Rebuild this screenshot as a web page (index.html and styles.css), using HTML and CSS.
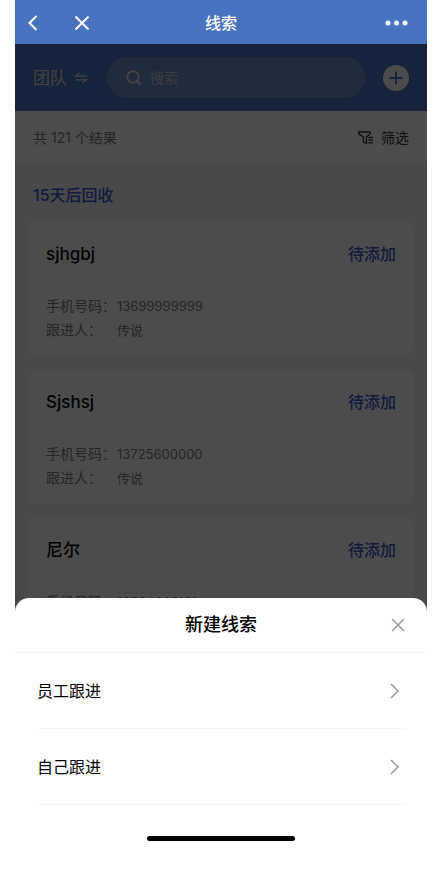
FILE: index.html
```html
<!DOCTYPE html>
<html lang="zh-CN">
<head>
<meta charset="utf-8">
<meta name="viewport" content="width=device-width, initial-scale=1">
<title>线索</title>
<link rel="stylesheet" href="styles.css">
</head>
<body>
<div class="screen">
  <header class="navbar">
    <div class="nav-actions">
      <button class="icon-btn" type="button" aria-label="返回"><svg width="12" height="18" viewBox="0 0 12 18"><path d="M9.5 2 2.5 9l7 7"/></svg></button>
      <button class="icon-btn" type="button" aria-label="关闭"><svg width="16" height="16" viewBox="0 0 16 16"><path d="m1.500 1.500 13 13M14.500 1.500l-13 13"/></svg></button>
    </div>
    <h1 class="nav-title">线索</h1>
    <button class="icon-btn nav-more" type="button" aria-label="更多"><svg class="solid" width="24" height="6" viewBox="0 0 24 6"><circle cx="3" cy="3" r="2.500"/><circle cx="11.500" cy="3" r="2.500"/><circle cx="20" cy="3" r="2.500"/></svg></button>
  </header>

  <div class="page">
    <div class="toolbar">
      <button class="team" type="button">团队<svg width="14" height="14" viewBox="0 0 14 14"><path d="M13 5.200H1.500L5.500 2M1 8.800h11.500L8.500 12"/></svg></button>
      <label class="search">
        <svg width="16" height="16" viewBox="0 0 16 16"><circle cx="7" cy="7" r="5.700"/><path d="m11.300 11.300 3.300 3.300"/></svg>
        <input type="search" placeholder="搜索" aria-label="搜索">
      </label>
      <button class="icon-btn" type="button" aria-label="新建"><svg class="add" width="26" height="26" viewBox="0 0 26 26"><circle cx="13" cy="13" r="13"/><path d="M13 6.500v13M6.500 13h13"/></svg></button>
    </div>
    <div class="summary">
      <span>共 121 个结果</span>
      <button class="filter" type="button"><svg width="15" height="14" viewBox="0 0 15 14"><path d="M.8 1h11.400v1.800L8.500 6v6.300l-3-1.300V6L.8 2.800zM10.500 6.500H15M10.500 9.200H15M10.500 11.900H15"/></svg>筛选</button>
    </div>
    <main class="list">
      <h2 class="group">15天后回收</h2>
      <article class="card">
        <div class="card-head"><h3>sjhgbj</h3><span class="status">待添加</span></div>
        <dl><dt>手机号码：</dt><dd>13699999999</dd><dt>跟进人：</dt><dd>传说</dd></dl>
      </article>
      <article class="card">
        <div class="card-head"><h3>Sjshsj</h3><span class="status">待添加</span></div>
        <dl><dt>手机号码：</dt><dd>13725600000</dd><dt>跟进人：</dt><dd>传说</dd></dl>
      </article>
      <article class="card">
        <div class="card-head"><h3>尼尔</h3><span class="status">待添加</span></div>
        <dl><dt>手机号码：</dt><dd>13584625121</dd><dt>跟进人：</dt><dd>传说</dd></dl>
      </article>
    </main>
    <div class="mask"></div>
  </div>

  <section class="sheet" role="dialog" aria-labelledby="sheet-title">
    <div class="sheet-head">
      <h2 id="sheet-title">新建线索</h2>
      <button class="icon-btn" type="button" aria-label="关闭"><svg width="14" height="14" viewBox="0 0 14 14"><path d="m1 1 12 12M13 1 1 13"/></svg></button>
    </div>
    <div class="options">
      <button class="option" type="button">员工跟进<svg width="10" height="16" viewBox="0 0 10 16"><path d="m1 1 7 7-7 7"/></svg></button>
      <button class="option" type="button">自己跟进<svg width="10" height="16" viewBox="0 0 10 16"><path d="m1 1 7 7-7 7"/></svg></button>
    </div>
    <div class="home-bar"></div>
  </section>
</div>
</body>
</html>
```
FILE: styles.css
```css
* {
  box-sizing: border-box;
}

body {
  margin: 0;
  padding: 0 11px 0 15px;
  background: #fff;
  color: #000;
  font-family: Inter, "Noto Sans CJK SC", sans-serif;
  font-size: 14px;
  line-height: 24px;
}

h1, h2, h3 {
  margin: 0;
  font-weight: 500;
}

dl, dd {
  margin: 0;
}

button {
  padding: 0;
  border: 0;
  background: none;
  color: inherit;
  font: inherit;
}

svg {
  display: block;
  flex: none;
  fill: none;
  stroke: currentColor;
  stroke-width: 2;
}

.screen {
  position: relative;
  display: flex;
  flex-direction: column;
  min-height: 100vh;
}

.navbar {
  display: grid;
  grid-template-columns: 1fr auto 1fr;
  align-items: center;
  height: 44px;
  padding: 2px 12px 0;
  background: #4873c0;
  color: #fff;
}

.nav-actions {
  display: flex;
  align-items: center;
  gap: 35px;
}

.nav-title {
  font-size: 16px;
}

.nav-more {
  justify-self: end;
  padding-right: 6px;
}

.solid {
  fill: currentColor;
  stroke: none;
}

.page {
  position: relative;
  flex: 1;
  background: #f4f4f8;
}

.mask {
  position: absolute;
  inset: 0;
  background: rgb(0 0 0 / 70%);
}

.toolbar {
  display: flex;
  align-items: center;
  height: 67px;
  padding: 0 18px;
  background: #4c75c1;
  color: #fff;
}

.team {
  display: flex;
  align-items: center;
  gap: 7px;
  font-size: 17px;
  color: #e0ddd6;
}

.team svg {
  stroke-width: 1.3;
}

.search {
  display: flex;
  flex: 1;
  align-items: center;
  gap: 8px;
  min-width: 0;
  height: 41px;
  margin: 0 18px 0 19px;
  padding: 0 19px;
  border-radius: 21px;
  background: #6e8fc6;
  color: #e0e0e0;
}

.search input {
  flex: 1;
  min-width: 0;
  padding: 0;
  border: 0;
  outline: 0;
  background: none;
  color: inherit;
  font: inherit;
}

.search input::placeholder {
  color: #c8ccd2;
  opacity: 1;
}

.add {
  fill: #fff;
  stroke: none;
}

.add path {
  stroke: #4c75c1;
}

.summary {
  display: flex;
  align-items: center;
  justify-content: space-between;
  height: 53px;
  padding: 0 18px;
  background: #fff;
  color: #808080;
}

.filter {
  display: flex;
  align-items: center;
  gap: 8px;
  color: #333;
}

.filter svg {
  stroke-width: 1.3;
}

.list {
  display: flex;
  flex-direction: column;
  gap: 15px;
  padding: 19px 13px 0;
}

.group {
  padding-left: 5px;
  color: #3d5cc8;
  font-size: 16px;
}

.list .card {
  padding: 0 18px 13px;
  border-radius: 8px;
  background: #fff;
}

.card-head {
  display: flex;
  align-items: center;
  justify-content: space-between;
  height: 60px;
  padding-top: 4px;
  border-bottom: 1px solid #f4f4f8;
}

.card-head h3 {
  font-size: 17px;
}

.status {
  color: #3d5cc8;
  font-size: 16px;
  font-weight: 500;
}

dl {
  display: grid;
  grid-template-columns: 71px 1fr;
  padding-top: 12px;
  color: #808080;
}

dt {
  white-space: nowrap;
}

dd {
  font-size: 13px;
}

.sheet {
  position: absolute;
  right: 0;
  bottom: 0;
  left: 0;
  padding-bottom: 31px;
  border-radius: 14px 14px 0 0;
  background: #fff;
}

.sheet-head {
  display: grid;
  grid-template-columns: 1fr auto 1fr;
  align-items: center;
  height: 55px;
  padding: 0 22px;
  border-bottom: 1px solid #f6f6f6;
}

.sheet-head h2 {
  grid-column: 2;
  font-size: 18px;
}

.sheet-head .icon-btn {
  justify-self: end;
  color: #999;
}

.sheet-head svg,
.option svg {
  stroke-width: 1.5;
}

.options {
  padding: 0 22px;
}

.option {
  display: flex;
  align-items: center;
  justify-content: space-between;
  width: 100%;
  height: 76px;
  padding-right: 5px;
  border-bottom: 1px solid #f6f6f6;
  font-size: 16px;
}

.option svg {
  color: #999;
}

.home-bar {
  width: 148px;
  height: 5px;
  margin: 31px auto 0;
  border-radius: 3px;
  background: #000;
}
```
